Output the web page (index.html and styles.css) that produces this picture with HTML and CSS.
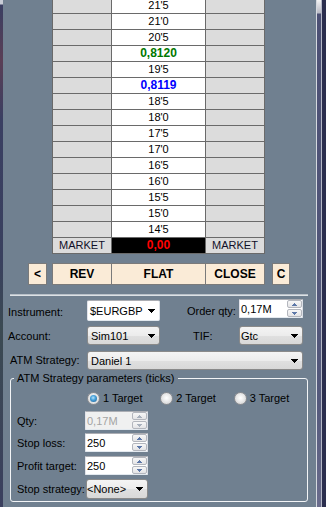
FILE: index.html
```html
<!DOCTYPE html>
<html>
<head>
<meta charset="utf-8">
<link rel="stylesheet" href="styles.css">
</head>
<body>
<div class="window">
  <div class="edge-left"></div>
  <div class="main">
    <div class="ladder">
      <div class="c side"></div><div class="c price">21'5</div><div class="c side"></div>
      <div class="c side"></div><div class="c price">21'0</div><div class="c side"></div>
      <div class="c side"></div><div class="c price">20'5</div><div class="c side"></div>
      <div class="c side"></div><div class="c price ask">0,8120</div><div class="c side"></div>
      <div class="c side"></div><div class="c price">19'5</div><div class="c side"></div>
      <div class="c side"></div><div class="c price bid">0,8119</div><div class="c side"></div>
      <div class="c side"></div><div class="c price">18'5</div><div class="c side"></div>
      <div class="c side"></div><div class="c price">18'0</div><div class="c side"></div>
      <div class="c side"></div><div class="c price">17'5</div><div class="c side"></div>
      <div class="c side"></div><div class="c price">17'0</div><div class="c side"></div>
      <div class="c side"></div><div class="c price">16'5</div><div class="c side"></div>
      <div class="c side"></div><div class="c price">16'0</div><div class="c side"></div>
      <div class="c side"></div><div class="c price">15'5</div><div class="c side"></div>
      <div class="c side"></div><div class="c price">15'0</div><div class="c side"></div>
      <div class="c side"></div><div class="c price">14'5</div><div class="c side"></div>
      <div class="c side mk">MARKET</div><div class="c pnl">0,00</div><div class="c side mk">MARKET</div>
    </div>

    <div class="btnrow">
      <div class="btn lt">&lt;</div>
      <div class="btngroup">
        <div class="gb">REV</div><div class="gb">FLAT</div><div class="gb">CLOSE</div>
      </div>
      <div class="btn cc">C</div>
    </div>

    <div class="sep"></div>

    <div class="form">
      <div class="frow r1">
        <div class="lbl l-inst">Instrument:</div>
        <div class="edit w73"><span class="val">$EURGBP</span><svg class="arr" width="7" height="4" viewBox="0 0 7 4"><path d="M0 0h7v1H0zM1 1h5v1H1zM2 2h3v1H2zM3 3h1v1H3z"/></svg></div>
        <div class="lbl l-qty">Order qty:</div>
        <div class="num w64">
          <span class="val">0,17M</span>
          <div class="spin"><div class="sb"><svg width="5" height="3" viewBox="0 0 5 3"><path d="M2 0h1v1H2zM1 1h3v1H1zM0 2h5v1H0z"/></svg></div><div class="sb"><svg width="5" height="3" viewBox="0 0 5 3"><path d="M0 0h5v1H0zM1 1h3v1H1zM2 2h1v1H2z"/></svg></div></div>
        </div>
      </div>
      <div class="frow r2">
        <div class="lbl l-acc">Account:</div>
        <div class="combo w73"><span class="val">Sim101</span><svg class="arr" width="7" height="4" viewBox="0 0 7 4"><path d="M0 0h7v1H0zM1 1h5v1H1zM2 2h3v1H2zM3 3h1v1H3z"/></svg></div>
        <div class="lbl l-tif">TIF:</div>
        <div class="combo w64 tight"><span class="val">Gtc</span><svg class="arr" width="7" height="4" viewBox="0 0 7 4"><path d="M0 0h7v1H0zM1 1h5v1H1zM2 2h3v1H2zM3 3h1v1H3z"/></svg></div>
      </div>
      <div class="frow r3">
        <div class="lbl l-atm">ATM Strategy:</div>
        <div class="combo w216"><span class="val">Daniel 1</span><svg class="arr" width="7" height="4" viewBox="0 0 7 4"><path d="M0 0h7v1H0zM1 1h5v1H1zM2 2h3v1H2zM3 3h1v1H3z"/></svg></div>
      </div>
    </div>

    <fieldset class="group">
      <legend>ATM Strategy parameters (ticks)</legend>
      <div class="ginner">
        <div class="radios">
          <div class="ritem"><span class="radio on"></span><span>1 Target</span></div>
          <div class="ritem"><span class="radio"></span><span>2 Target</span></div>
          <div class="ritem"><span class="radio"></span><span>3 Target</span></div>
        </div>
        <div class="prow p-qty">
          <div class="plbl">Qty:</div>
          <div class="num w63 disabled">
            <span class="val">0,17M</span>
            <div class="spin"><div class="sb"><svg width="5" height="3" viewBox="0 0 5 3"><path d="M2 0h1v1H2zM1 1h3v1H1zM0 2h5v1H0z"/></svg></div><div class="sb"><svg width="5" height="3" viewBox="0 0 5 3"><path d="M0 0h5v1H0zM1 1h3v1H1zM2 2h1v1H2z"/></svg></div></div>
          </div>
        </div>
        <div class="prow p-sl">
          <div class="plbl">Stop loss:</div>
          <div class="num w63">
            <span class="val">250</span>
            <div class="spin"><div class="sb"><svg width="5" height="3" viewBox="0 0 5 3"><path d="M2 0h1v1H2zM1 1h3v1H1zM0 2h5v1H0z"/></svg></div><div class="sb"><svg width="5" height="3" viewBox="0 0 5 3"><path d="M0 0h5v1H0zM1 1h3v1H1zM2 2h1v1H2z"/></svg></div></div>
          </div>
        </div>
        <div class="prow p-pt">
          <div class="plbl">Profit target:</div>
          <div class="num w63">
            <span class="val">250</span>
            <div class="spin"><div class="sb"><svg width="5" height="3" viewBox="0 0 5 3"><path d="M2 0h1v1H2zM1 1h3v1H1zM0 2h5v1H0z"/></svg></div><div class="sb"><svg width="5" height="3" viewBox="0 0 5 3"><path d="M0 0h5v1H0zM1 1h3v1H1zM2 2h1v1H2z"/></svg></div></div>
          </div>
        </div>
        <div class="prow p-ss">
          <div class="plbl">Stop strategy:</div>
          <div class="combo w62 tight2"><span class="val">&lt;None&gt;</span><svg class="arr" width="7" height="4" viewBox="0 0 7 4"><path d="M0 0h7v1H0zM1 1h5v1H1zM2 2h3v1H2zM3 3h1v1H3z"/></svg></div>
        </div>
      </div>
    </fieldset>
  </div>
  <div class="edge-right">
    <div class="er1"></div><div class="er2"></div><div class="er3"></div><div class="er4"></div>
  </div>
</div>
</body>
</html>
```

FILE: styles.css
```css
* { box-sizing: border-box; }
html, body {
  margin: 0;
  padding: 0;
  width: 326px;
  height: 507px;
  overflow: hidden;
  background: #708090;
  font-family: "Liberation Sans", Arial, sans-serif;
  font-size: 11px;
  color: #000;
}
.window {
  display: flex;
  width: 326px;
  height: 507px;
}
.edge-left {
  width: 3px;
  flex: none;
  background: linear-gradient(#c8ccd6 0, #c8ccd6 4px, #3a3f62 5px, #5a3e55 60px, #3a3f62 120px, #39405e 260px, #3b4a52 330px, #3a3f5e 507px);
}
.main {
  width: 313px;
  flex: none;
}
.edge-right {
  display: flex;
  width: 10px;
  flex: none;
}
.er1 { width: 1px; background: #d4d8de; }
.er2 { width: 4px; background: linear-gradient(#f4f4f4 0, #e0e0e4 4px, #b8bac4 13px, #4c5074 14px, #555a7c 400px, #6a6c8c 507px); }
.er3 { width: 1px; background: #b4b8c6; }
.er4 { width: 4px; background: #2b2e4e; }

/* ladder */
.ladder {
  margin: -3px 0 0 49px;
  width: 213px;
  display: grid;
  grid-template-columns: 58px 93px 58px;
  grid-auto-rows: 15px;
  gap: 1px;
  background: #6a6a6a;
  border: 1px solid #6a6a6a;
}
.c {
  line-height: 15px;
  text-align: center;
  white-space: nowrap;
}
.side { background: #dcdcdc; }
.price { background: #fff; }
.price.ask { color: #007800; font-weight: bold; font-size: 12px; }
.price.bid { color: #0000ff; font-weight: bold; font-size: 12px; }
.mk { color: #101028; }
.pnl { background: #000; color: #ff0000; font-weight: bold; font-size: 12px; }

/* buttons */
.btnrow {
  display: flex;
  margin: 9px 0 0 25px;
  height: 22px;
}
.btn, .gb {
  background: #faebd7;
  font-weight: bold;
  font-size: 12px;
  line-height: 20px;
  text-align: center;
  color: #000;
}
.btn { border: 1px solid #7a7a7a; height: 22px; }
.btn.lt { width: 19px; }
.btn.cc { width: 18px; margin-left: 7px; }
.btngroup {
  margin-left: 5px;
  width: 213px;
  height: 22px;
  display: grid;
  grid-template-columns: 58px 93px 58px;
  gap: 1px;
  background: #7a7a7a;
  border: 1px solid #7a7a7a;
}

.sep {
  margin: 9px 0 0 7px;
  width: 298px;
  height: 2px;
  border-top: 1px solid #b9c1c9;
  border-bottom: 1px solid #dde2e6;
}

/* form */
.form { padding: 3px 0 0 5px; }
.frow { display: flex; align-items: flex-start; }
.frow.r1 { height: 27px; }
.frow.r2 { height: 25px; }
.frow.r3 { height: 19px; }
.lbl { width: 79px; line-height: 13px; white-space: nowrap; flex: none; }
.l-inst { margin-top: 7px; }
.l-qty { margin-top: 6px; padding-left: 27px; }
.l-acc { margin-top: 4px; }
.l-tif { margin-top: 4px; padding-left: 33px; }
.l-atm { margin-top: 3px; padding-left: 2px; }

.w73 { width: 73px; }
.w64 { width: 64px; }
.w63 { width: 63px; }
.w62 { width: 62px; }
.w216 { width: 216px; }

.val { white-space: nowrap; }
.arr { display: block; flex: none; }

.edit {
  height: 21px;
  margin-top: 1px;
  background: #fff;
  border: 1px solid;
  border-color: #abadb3 #dbdfe6 #e3e9ef #e2e3ea;
  border-radius: 2px;
  display: flex;
  align-items: center;
  justify-content: space-between;
  padding: 0 4px 0 2px;
}
.combo {
  height: 19px;
  border: 1px solid #8a8a8a;
  border-radius: 3px;
  background: linear-gradient(#f4f4f4, #ececec 50%, #e0e0e0 51%, #d8d8d8);
  display: flex;
  align-items: center;
  justify-content: space-between;
  padding: 0 4px 0 3px;
  flex: none;
}
.combo.tight { padding-left: 1px; }
.combo.tight2 { padding-left: 0; height: 20px; margin-left: 1px; }

.num {
  height: 19px;
  background: #fff;
  border: 1px solid;
  border-color: #abadb3 #dbdfe6 #e3e9ef #e2e3ea;
  border-radius: 1px;
  display: flex;
  align-items: center;
  justify-content: space-between;
  padding: 0 0 0 1px;
  flex: none;
}
.num.disabled { background: #f0f0f0; color: #a3a3a3; }
.spin {
  display: flex;
  flex-direction: column;
  gap: 1px;
  width: 15px;
  height: 17px;
  margin-right: 0;
}
.sb {
  flex: 1;
  border: 1px solid #b3b6bd;
  border-radius: 2px;
  background: linear-gradient(#f7f7f7, #e4e4e6);
  display: flex;
  align-items: center;
  justify-content: center;
}
.sb svg { display: block; fill: #5d78a8; }
.num.disabled .sb svg { fill: #a8b0bc; }

/* group */
.group {
  margin: 1px 0 0 7px;
  width: 298px;
  min-width: 0;
  border: 1px solid #f2f4f6;
  border-radius: 3px;
  padding: 0 0 2px 3px;
}
.group legend {
  padding: 0 3px;
  line-height: 14px;
  font-size: 11px;
}
.ginner { padding-left: 3px; }
.radios {
  display: flex;
  padding-left: 70px;
  margin-top: 7px;
  height: 13px;
}
.ritem {
  width: 76px;
  display: flex;
  align-items: center;
  gap: 3px;
  line-height: 13px;
  white-space: nowrap;
}
.radio {
  width: 13px;
  height: 13px;
  border-radius: 50%;
  border: 1px solid #8c8e92;
  background: radial-gradient(circle at 50% 45%, #ffffff 0, #ececec 40%, #c9cacc 100%);
  display: flex;
  align-items: center;
  justify-content: center;
  flex: none;
}
.radio.on::after {
  content: "";
  width: 7px;
  height: 7px;
  border-radius: 50%;
  background: radial-gradient(circle at 45% 40%, #b6e3fb 0, #4aa3db 40%, #18568c 100%);
}
.prow { display: flex; align-items: flex-start; }
.p-qty { margin-top: 6px; height: 22px; }
.p-sl { height: 23px; }
.p-pt { height: 23px; }
.p-ss { height: 20px; }
.plbl { width: 68px; flex: none; line-height: 13px; margin-top: 4px; white-space: nowrap; }
.p-qty .plbl { margin-top: 4px; }
```
